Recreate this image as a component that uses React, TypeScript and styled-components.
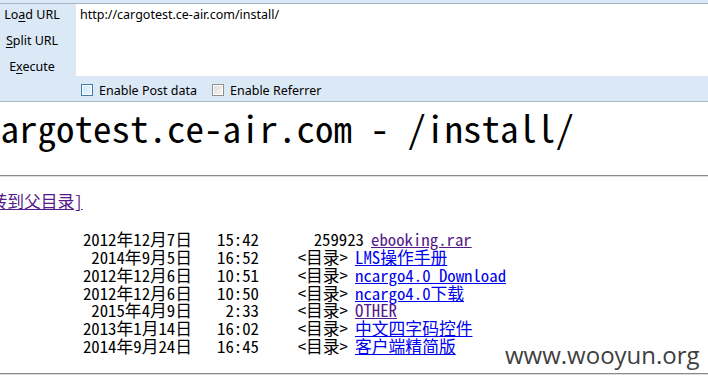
import styled, { createGlobalStyle } from "styled-components";

const GlobalStyle = createGlobalStyle`
  html, body {
    margin: 0;
    padding: 0;
    background: #ffffff;
  }
`;

const uiFont = `"Noto Sans", "Open Sans", "Liberation Sans", sans-serif`;
const pageFont = `"Noto Sans Mono CJK SC", "Liberation Mono", "Noto Sans CJK SC", monospace`;

const entries = [
  { date: "2012年12月7日", time: "15:42", size: "259923", name: "ebooking.rar", dir: false, visited: true },
  { date: "2014年9月5日", time: "16:52", size: "<目录>", name: "LMS操作手册", dir: true, visited: false },
  { date: "2012年12月6日", time: "10:51", size: "<目录>", name: "ncargo4.0 Download", dir: true, visited: false },
  { date: "2012年12月6日", time: "10:50", size: "<目录>", name: "ncargo4.0下载", dir: true, visited: false },
  { date: "2015年4月9日", time: "2:33", size: "<目录>", name: "OTHER", dir: true, visited: true },
  { date: "2013年1月14日", time: "16:02", size: "<目录>", name: "中文四字码控件", dir: true, visited: false },
  { date: "2014年9月24日", time: "16:45", size: "<目录>", name: "客户端精简版", dir: true, visited: false },
];

const App = () => {
  return (
    <Frame>
      <GlobalStyle />
      <Toolbar>
        <Panel>
          <MainRow>
            <Actions>
              <Action>
                Lo<u>a</u>d URL
              </Action>
              <Action>
                <u>S</u>plit URL
              </Action>
              <Action>
                E<u>x</u>ecute
              </Action>
            </Actions>
            <UrlBox readOnly value="http://cargotest.ce-air.com/install/" spellCheck={false} />
          </MainRow>
          <Options>
            <Option>
              <Box $focused />
              Enable Post data
            </Option>
            <Option>
              <Box />
              Enable Referrer
            </Option>
          </Options>
        </Panel>
      </Toolbar>

      <Page>
        <Title>cargotest.ce-air.com - /install/</Title>
        <Rule $top={26} />
        <Listing>
          <LinkLine>
            <FileLink href="#" $visited>
              [转到父目录]
            </FileLink>
          </LinkLine>
          <Rows>
            {entries.map((entry) => (
              <Row key={entry.name}>
                <DateCell>{entry.date}</DateCell>
                <TimeCell>{entry.time}</TimeCell>
                <SizeCell $dir={entry.dir}>{entry.size}</SizeCell>
                <FileLink href="#" $visited={entry.visited}>
                  {entry.name}
                </FileLink>
              </Row>
            ))}
          </Rows>
        </Listing>
        <Rule $top={17} />
      </Page>

      <Watermark>www.wooyun.org</Watermark>
    </Frame>
  );
};

export default App;

const Frame = styled.div`
  position: relative;
  width: 708px;
  height: 379px;
  overflow: hidden;
  background: #ffffff;
`;

const Toolbar = styled.div`
  background: #dbe8f5;
  padding-top: 3px;
  font-family: ${uiFont};
  font-size: 12.5px;
  color: #000000;
`;

const Panel = styled.div`
  border-top: 1px solid #a5b5ca;
  border-bottom: 1px solid #a5b5ca;
`;

const MainRow = styled.div`
  display: flex;
  height: 72px;
`;

const Actions = styled.div`
  width: 64px;
  margin-right: 12px;
  display: flex;
  flex-direction: column;
  gap: 4px;
`;

const Action = styled.div`
  height: 22px;
  line-height: 22px;
  text-align: center;
  white-space: nowrap;

  u {
    text-underline-offset: 2px;
  }
`;

const UrlBox = styled.textarea`
  flex: 1;
  margin: 0;
  border: none;
  outline: none;
  resize: none;
  overflow: hidden;
  background: #ffffff;
  padding: 3px 4px;
  font-family: ${uiFont};
  font-size: 12.5px;
  line-height: 16px;
  color: #000000;
`;

const Options = styled.div`
  height: 25px;
  box-sizing: border-box;
  padding: 3px 0 0 81px;
  display: flex;
  align-items: center;
  gap: 15px;
`;

const Option = styled.label`
  display: flex;
  align-items: center;
  gap: 6px;
  white-space: nowrap;
`;

const Box = styled.span<{ $focused?: boolean }>`
  width: 12px;
  height: 12px;
  box-sizing: border-box;
  border: 1px solid ${({ $focused }) => ($focused ? "#3d7bad" : "#8e8f8f")};
  background: ${({ $focused }) =>
    $focused
      ? "linear-gradient(135deg, #cfe6f8 0%, #eaf5fd 100%)"
      : "linear-gradient(135deg, #dcdcdc 0%, #f6f6f6 100%)"};
  box-shadow: inset 0 0 0 1px #ffffff;
`;

const Page = styled.div`
  margin-left: -18px;
  font-family: ${pageFont};
  color: #000000;
`;

const Title = styled.h1`
  margin: 3px 0 0;
  font-size: 37px;
  line-height: 44px;
  font-weight: normal;
  white-space: nowrap;
`;

const Rule = styled.hr<{ $top: number }>`
  margin: ${({ $top }) => $top}px 0 0;
  width: 760px;
  height: 0;
  border: none;
  border-top: 1px solid #8a8a8a;
  border-bottom: 1px solid #dedede;
`;

const Listing = styled.div`
  margin-top: 16px;
  font-size: 16.8px;
  line-height: 17.8px;
  white-space: pre;
`;

const LinkLine = styled.div`
  height: 18px;
`;

const Rows = styled.div`
  margin-top: 20px;
  display: flex;
  flex-direction: column;
`;

const Row = styled.div`
  display: flex;
  height: 17.85px;
  align-items: center;
`;

const DateCell = styled.span`
  width: 210px;
  text-align: right;
`;

const TimeCell = styled.span`
  width: 67px;
  text-align: right;
`;

const SizeCell = styled.span<{ $dir: boolean }>`
  width: ${({ $dir }) => ($dir ? 89 : 105)}px;
  margin-right: 7px;
  text-align: right;
`;

const FileLink = styled.a<{ $visited?: boolean }>`
  color: ${({ $visited }) => ($visited ? "#551a8b" : "#0000ee")};
  text-decoration: underline;
  text-underline-offset: 1px;
`;

const Watermark = styled.div`
  position: absolute;
  left: 505px;
  top: 343px;
  font-family: "Open Sans", "Noto Sans", sans-serif;
  font-size: 24px;
  line-height: 24px;
  color: #3f3f3f;
  white-space: nowrap;
`;
